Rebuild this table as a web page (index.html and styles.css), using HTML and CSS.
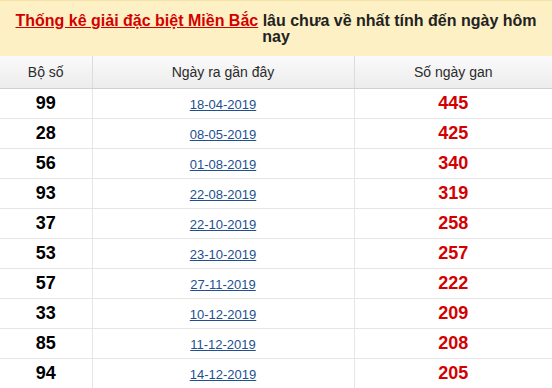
FILE: index.html
```html
<!DOCTYPE html>
<html lang="vi">
<head>
<meta charset="utf-8">
<title>Thống kê giải đặc biệt Miền Bắc</title>
<link rel="stylesheet" href="styles.css">
</head>
<body>
<div class="box">
  <h2 class="title"><a href="#" class="title-link">Thống kê giải đặc biệt Miền Bắc</a> lâu chưa về nhất tính đến ngày hôm nay</h2>
  <table class="gan">
    <colgroup>
      <col class="c1"><col class="c2"><col class="c3">
    </colgroup>
    <thead>
      <tr><th>Bộ số</th><th>Ngày ra gần đây</th><th>Số ngày gan</th></tr>
    </thead>
    <tbody>
      <tr><td class="num">99</td><td><a href="#" class="date">18-04-2019</a></td><td class="days">445</td></tr>
      <tr><td class="num">28</td><td><a href="#" class="date">08-05-2019</a></td><td class="days">425</td></tr>
      <tr><td class="num">56</td><td><a href="#" class="date">01-08-2019</a></td><td class="days">340</td></tr>
      <tr><td class="num">93</td><td><a href="#" class="date">22-08-2019</a></td><td class="days">319</td></tr>
      <tr><td class="num">37</td><td><a href="#" class="date">22-10-2019</a></td><td class="days">258</td></tr>
      <tr><td class="num">53</td><td><a href="#" class="date">23-10-2019</a></td><td class="days">257</td></tr>
      <tr><td class="num">57</td><td><a href="#" class="date">27-11-2019</a></td><td class="days">222</td></tr>
      <tr><td class="num">33</td><td><a href="#" class="date">10-12-2019</a></td><td class="days">209</td></tr>
      <tr><td class="num">85</td><td><a href="#" class="date">11-12-2019</a></td><td class="days">208</td></tr>
      <tr><td class="num">94</td><td><a href="#" class="date">14-12-2019</a></td><td class="days">205</td></tr>
    </tbody>
  </table>
</div>
</body>
</html>
```
FILE: styles.css
```css
html, body {
  margin: 0;
  padding: 0;
  background: #fff;
  font-family: "Liberation Sans", Arial, sans-serif;
}
.box {
  width: 552px;
}
.title {
  margin: 0;
  background: #fcf0c4;
  border-top: 1px solid #f3e3a8;
  padding: 12px 10px 11px;
  height: 32px;
  text-align: center;
  font-size: 16px;
  line-height: 16px;
  font-weight: bold;
  color: #222;
}
.title-link {
  color: #d40000;
  text-decoration: underline;
}
.gan {
  width: 552px;
  border-collapse: collapse;
  table-layout: fixed;
}
.c1 { width: 92px; }
.c2 { width: 262px; }
.c3 { width: 198px; }
.gan th {
  height: 32px;
  padding: 0;
  font-weight: normal;
  font-size: 14px;
  color: #2b2b2b;
  background: linear-gradient(#fafafa, #ececec);
  border-left: 1px solid #dcdcdc;
  border-bottom: 1px solid #d0d0d0;
  text-align: center;
}
.gan td {
  height: 29px;
  padding: 0;
  text-align: center;
  border-left: 1px solid #e6e6e6;
  border-bottom: 1px solid #e6e6e6;
}
.gan th:first-child, .gan td:first-child { border-left: none; }
.num {
  font-size: 18px;
  font-weight: bold;
  color: #000;
}
.days {
  font-size: 18px;
  font-weight: bold;
  color: #d40000;
}
.date {
  font-size: 13px;
  color: #22508f;
  text-decoration: underline;
}
```
